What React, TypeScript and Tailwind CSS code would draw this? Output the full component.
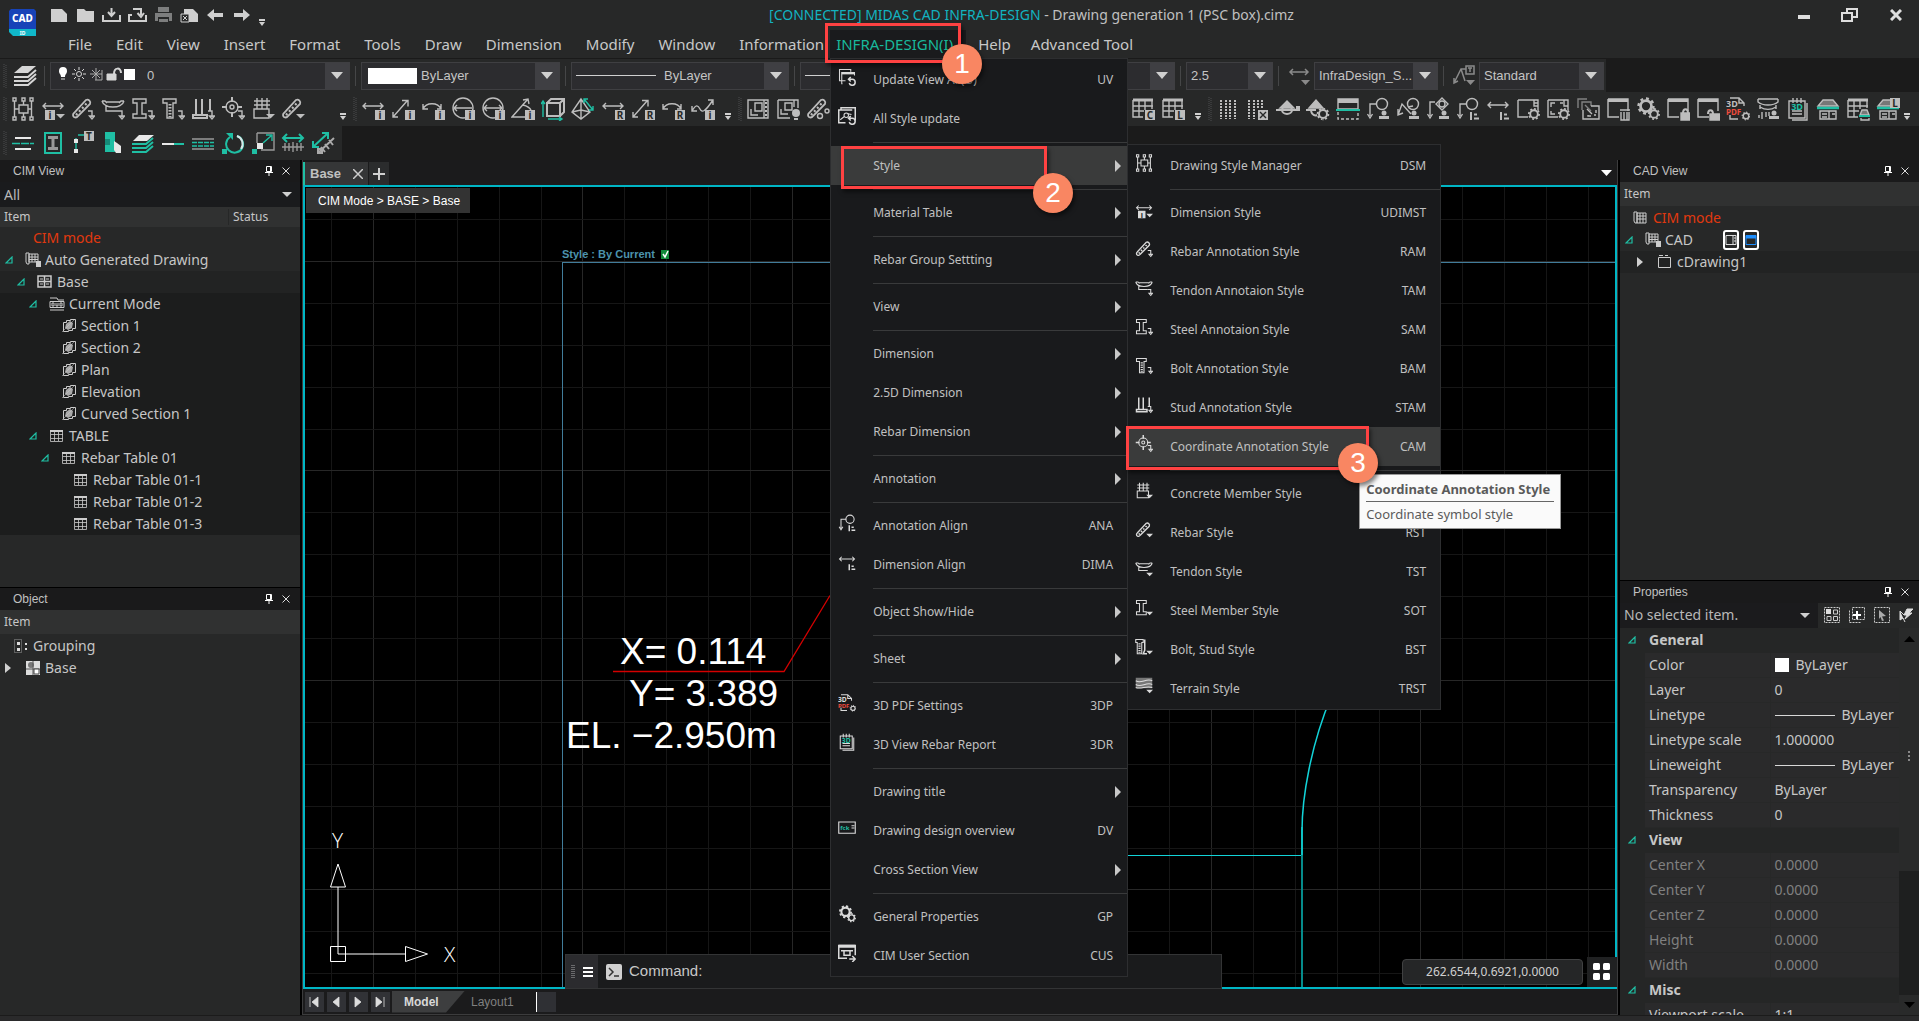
import React from 'react';

const ARIAL = "font-['Liberation_Sans',Arial,sans-serif]";
const TEAL = '#1fbfa4';

/* ---------- icon pieces (24 x 24 box) ---------- */

const Gear: React.FC<{ cx: number; cy: number; r: number }> = ({ cx, cy, r }) => (
  <g>
    <circle cx={cx} cy={cy} r={r} strokeWidth={r * 0.5} />
    <circle cx={cx} cy={cy} r={r * 1.35} strokeWidth={r * 0.45} pathLength={16} strokeDasharray="1 1" />
  </g>
);

const Letter: React.FC<{ children: string; x?: number; y?: number }> = ({ children, x = 14, y = 13 }) => (
  <g>
    <rect x={x} y={y} width={10} height={10} fill="currentColor" stroke="none" />
    <text x={x + 5} y={y + 9} fontSize={10} fontWeight={700} textAnchor="middle" fill="#272828" stroke="none">
      {children}
    </text>
  </g>
);

const hook = <path d="M17 14h4v6M18.500 19l2.500 3 2.500-3z" />;
const caret = <path d="M15 17h9l-4.500 4.500z" fill="currentColor" stroke="none" />;
const hArrow = <path d="M2 9h20M5 6L2 9l3 3M19 6l3 3-3 3" />;
const rebarBar = (
  <g>
    <path d="M3 20a2.500 2.500 0 010-4L15 3a3 3 0 014 4L7 19a3 3 0 01-4 1z" strokeWidth={1.800} />
    <path d="M5 18L17 5" strokeWidth={2.200} strokeDasharray="2 2.500" />
  </g>
);
const tendonBar = (
  <g>
    <path d="M5 5h14M1 4h3l2 2M23 4h-3l-2 2M1 4c2 8 20 8 22 0M5 9v5h12" />
  </g>
);
const steelBeam = <path d="M2 2h13v4h-4v11h4v4H2v-4h4V6H2z" />;
const bolt = (
  <g>
    <path d="M2 2h13v4h-3v15H6V6H2z" />
    <path d="M9 7v13" strokeWidth={3} strokeDasharray="1.500 1.500" />
  </g>
);
const target = (
  <g>
    <circle cx={11} cy={10} r={6} />
    <circle cx={11} cy={10} r={2} />
    <path d="M11 0v5M11 15v5M1 10h5M16 10h5" strokeWidth={2} />
  </g>
);
const windowFrame = (
  <g>
    <path d="M2 2h20v12M2 2v18h11" />
    <path d="M2 3.500h20" strokeWidth={3} />
  </g>
);
const tableGrid = (
  <g>
    <path d="M2 3h20" strokeWidth={3} />
    <path d="M2 3v17h10M2 9h20M2 14h11M8 3v17M14 3v10M21 3v9" />
  </g>
);
const bubble = (
  <g>
    <circle cx={16} cy={7} r={5.500} />
    <path d="M11 7H4v12M1.500 17L4 21l2.500-4" />
  </g>
);
const stamp = (
  <g fill="currentColor" stroke="none">
    <circle cx={18} cy={16} r={2.500} />
    <path d="M13 19h10v3H13z" />
  </g>
);
const listMark = <path d="M15 15v8M18 17.500h3M18 21.500h5" strokeWidth={2} />;
const house = (
  <g>
    <path d="M7 3h10l5 6H2z" fill="#777" />
    <path d="M1 11h22" stroke={TEAL} strokeWidth={2.500} />
    <path d="M4 14h16v8H4zM13 14v8M6 17h5M6 20h5M16 17h3" />
  </g>
);

const icons: Record<string, React.ReactNode> = {
  styleManager: <path d="M2 1h3v3H2zM11 1h3v3h-3zM19 1h3v3h-3zM2 20h3v3H2zM11 20h3v3h-3zM19 20h3v3h-3zM8 8h9v8H8zM3.500 4v16M20.500 4v16M12.500 4v4M12.500 16v4M3.500 12H8M17 12h3.500" />,
  dimStyle: <g>{hArrow}<Letter x={4} y={13}>i</Letter>{caret}</g>,
  rebarAnn: <g>{rebarBar}{hook}</g>,
  tendonAnn: <g>{tendonBar}{hook}</g>,
  steelAnn: <g>{steelBeam}{hook}</g>,
  boltAnn: <g>{bolt}{hook}</g>,
  studAnn: <g><path d="M2 18h14v3H2zM5 18V2M11 18V2M19 14V2" strokeWidth={2} />{hook}</g>,
  coordAnn: <g>{target}{hook}</g>,
  concrete: <g><path d="M3 12h15v9H3zM6 1v11M11 1v11M16 1v11M3 4h16M3 8h16" />{caret}</g>,
  rebar: <g>{rebarBar}{caret}</g>,
  tendon: <g>{tendonBar}{caret}</g>,
  steel: <g>{steelBeam}{caret}</g>,
  boltStud: <g><path d="M1 2h10v4H9v15H3V6H1z" /><path d="M6 7v13" strokeWidth={3} strokeDasharray="1.500 1.500" /><path d="M13 2v14l-2 5h5" strokeWidth={2} />{caret}</g>,
  terrain: <g><path d="M1 1h22v14H1z" fill="#777" stroke="none" /><path d="M1 5c7 5 14-4 22 0M1 10c7 5 14-4 22 0M1 14c7 3 14-3 22 0" stroke="#ddd" />{caret}</g>,
  dimI: <g>{hArrow}<Letter>i</Letter></g>,
  alignedI: <g><path d="M2 20L16 4M11 3.500h6v6M2 15v5h5" /><Letter>i</Letter></g>,
  arcI: <g><path d="M2 12C5 5 17 5 20 12M2 7v5h5M20 7v5h-4" /><Letter>i</Letter></g>,
  radiusI: <g><circle cx={12} cy={11} r={10} /><path d="M3 11h18M6 8l-3 3 3 3" /><Letter>i</Letter></g>,
  diameterI: <g><circle cx={12} cy={11} r={10} /><path d="M3 11h18M6 8l-3 3 3 3M18 8l3 3-3 3" /><Letter>i</Letter></g>,
  angleI: <g><path d="M14 20H1L17 2M12 8c4 1 7 3 8 5M12 3l5-1 1 5" /><Letter>i</Letter></g>,
  box3d: <g><path d="M6 6h13v13H6zM6 6l4-4h13v13l-4 4M19 6l4-4" strokeWidth={2} /><path d="M2 5v15M0 7l2-3 2 3M7 22h13M18 20l3 2-3 2" stroke={TEAL} /></g>,
  pyramid: <g><path d="M10 2L1 15l9 7 9-7zM10 2v20M1 15l9-2 9 2" /><path d="M13 2l9 11M13 6V2h4M22 9v4h-4" stroke={TEAL} /></g>,
  dimR: <g>{hArrow}<Letter>R</Letter></g>,
  alignedR: <g><path d="M2 20L16 4M11 3.500h6v6M2 15v5h5" /><Letter>R</Letter></g>,
  arcR: <g><path d="M2 12C5 5 17 5 20 12M2 7v5h5M20 7v5h-4" /><Letter>R</Letter></g>,
  curveI: <g><path d="M1 14c4-7 6-6 8-2s5 3 13-9M17 3h5v5M1 9v5h5" /><Letter>i</Letter></g>,
  sheet: <g><path d="M2 3h20v18H2zM18 3v18M5 12v6h7M9 6h7v8H9z" /><path d="M19 6h2M19 10h2M19 14h2M19 18h2" strokeWidth={2} /></g>,
  sheetBulb: <g><path d="M2 3h20v8M2 3v18h12M18 3v7M5 12v5h7M9 6h7v7H9z" /><circle cx={20} cy={16} r={4} fill="currentColor" stroke="none" /><path d="M18 22h4" strokeWidth={2} /></g>,
  rebarDots: <g>{rebarBar}<circle cx={14} cy={19} r={2.500} /><circle cx={21} cy={14} r={2} /></g>,
  tableC: <g>{tableGrid}<Letter>C</Letter></g>,
  tableL: <g>{tableGrid}<Letter>L</Letter></g>,
  dotsV: <path d="M5 3v19M10 3v19M14 3v19M19 3v19" strokeWidth={2} strokeDasharray="2 1" />,
  dotsX: <g><path d="M3 3v19M8 3v19M12 3v9M16 3v9" strokeWidth={2} strokeDasharray="2 1" /><path d="M12 13h10v10H12z" fill="currentColor" stroke="none" /><path d="M14 15l6 6M20 15l-6 6" stroke="#272828" /></g>,
  level: <g><path d="M4 11l7-7 7 7z" fill="currentColor" /><ellipse cx={11} cy={13} rx={5} ry={4} strokeWidth={2} /><path d="M0 13h24" strokeWidth={2} /><path d="M20 9h4v4h-4z" fill="currentColor" stroke="none" /></g>,
  levelGear: <g><path d="M3 11l7-8 7 8z" fill="currentColor" /><path d="M0 13h10M5 14c1 4 4 5 6 4" strokeWidth={2} /><Gear cx={17} cy={17} r={4} /></g>,
  section: <g><path d="M2 2h20v10H2z" /><path d="M2 4h20" strokeWidth={4} /><path d="M0 13h24" stroke={TEAL} strokeWidth={2} /><path d="M2 15v7h20v-7" strokeDasharray="3 2" /></g>,
  annStamp: <g>{bubble}{stamp}</g>,
  annStamp2: <g><circle cx={17} cy={7} r={5.500} /><path d="M2 18L6 7l9 10M2 12v6l5-2M12 10l5-1" />{stamp}</g>,
  coordStamp: <g><path d="M9 5H4v14M1.500 17L4 21l2.500-4" /><circle cx={16} cy={7} r={3} /><path d="M16 1l6 6-6 6-6-6z" />{stamp}</g>,
  annAlign: <g>{bubble}{listMark}</g>,
  dimAlign: <g><path d="M2 8h20M5 5L2 8l3 3M19 5l3 3-3 3" />{listMark}</g>,
  winGear: <g><path d="M2 3h20v10M2 3v17h10M18 3v6h4M18 6h4" /><Gear cx={18} cy={17} r={3.800} /></g>,
  frameGear: <g><path d="M2 3h20v10M2 3v17h10M18 3v6h4M5 10V6h4M5 14v3h4M14 6h3" /><Gear cx={18} cy={17} r={3.800} /></g>,
  convert: <g><path d="M2 11V2h9M2 2l4 0M6 13V5h9v4M9 8l6 6" strokeOpacity={0.600} /><path d="M15 9h8v13H7V13M11 12l5 5M12 18v1h3M20 13v3M20 18h-2" /></g>,
  winTrash: <g>{windowFrame}<path d="M14 13h10M15 15v8h8v-8M18 15v8M21 15v8" /></g>,
  gears: <g><Gear cx={10} cy={9} r={5.500} /><Gear cx={18} cy={17} r={3.800} /></g>,
  winLock: <g>{windowFrame}<path d="M15 16h9v7h-9z" fill="currentColor" /><path d="M17 16c0-5 5-5 5 0" strokeWidth={2} /></g>,
  winUnlock: <g>{windowFrame}<path d="M14 17h10v6H14z" fill="currentColor" /><path d="M12 17c0-5 5-5 5 0" strokeWidth={2} /></g>,
  pdf3d: (
    <g>
      <path d="M4 1h9l5 5v3M13 1v5h5M4 18v4h8" />
      <g stroke="none" fontSize={9} fontWeight={700}>
        <rect x={0} y={3} width={11} height={7} fill="#1c1c1e" />
        <text x={0} y={10} fill="currentColor">3D</text>
        <text x={0} y={18} fill="#ee4b3c" fontSize={8}>PDF</text>
      </g>
      <Gear cx={20} cy={19} r={2.800} />
    </g>
  ),
  pileStamp: <g><path d="M2 2v3c5 4 15 4 20 0V2M4 10c5 3 11 3 16 0M4 8v4M20 8v4M6 15v7M10 15v5M3 18v3M13 15v4M2 2h20" />{stamp}</g>,
  report3d: (
    <g>
      <path d="M3 4h16v17H3zM7 1v5M11 1v5M15 1v5M21 6v17H6M6 17h10M6 14h10" />
      <text x={11} y={13} fontSize={9} fontWeight={700} fill={TEAL} stroke="none" textAnchor="middle">3D</text>
    </g>
  ),
  house,
  tableHouse: <g><path d="M2 3h20" strokeWidth={3} /><path d="M2 3v17h10M2 9h20M2 14h11M8 3v17M14 3v9M21 3v8" /><path d="M16 13h5l2 5h-9z" fill="#777" /><path d="M13 19h11" stroke={TEAL} strokeWidth={2} /><path d="M15 21v2h8v-2" /></g>,
  houseL: <g>{house}<Letter x={14} y={1}>L</Letter></g>,
  updateView: <g><path d="M10 17H2V2h15v3M6 21H5V6h17v4" /><path d="M5 7h17" strokeWidth={3} /><path d="M14 15h5a4 4 0 11-4 5M17 12l-3 3 3 3" strokeWidth={2} /></g>,
  styleUpdate: <g><path d="M10 21H1V4h18M4 4V1h19v17" strokeWidth={2} /><circle cx={11} cy={11} r={3} /><path d="M3 17l5-4M13 9l5 1" /><path d="M14 15h5a4 4 0 11-4 5M17 12l-3 3 3 3" strokeWidth={2} /></g>,
  overview: <g><path d="M1 4h22v15H1z" strokeWidth={1.500} /><text x={3} y={15} fontSize={8} fontWeight={700} fill={TEAL} stroke="none">fck</text><path d="M18 9h4M18 12h4" /></g>,
  userSection: <g><path d="M12 19H1V2h22v13" strokeWidth={2} /><path d="M1 3h22" strokeWidth={4} /><path d="M4 9h16M8 9v6h8V9M15 20h7M19 16l4 4-4 4" strokeWidth={2} /></g>,
  // third toolbar
  lineRows: <g><path d="M4 7h16M4 18h16" stroke="#e8e8e8" strokeWidth={2} /><path d="M1 12.500h22" stroke={TEAL} strokeDasharray="8 1" /></g>,
  beamBox: <g><path d="M4 2h16v20H4z" stroke={TEAL} strokeWidth={2} /><path d="M7 5h10v3h-3.500v8H17v3H7v-3h3.500V8H7z" fill="#999" stroke="none" /></g>,
  leaderT: <g><path d="M5 19V7M7 4h7" stroke={TEAL} /><Letter x={13} y={0}>T</Letter><path d="M3 8h4v4H3zM3 18h4v4H3z" fill="#e8e8e8" stroke="none" /></g>,
  pick: <g><path d="M4 1h10v20H4z" fill={TEAL} stroke="none" /><path d="M4 8h5v6H4z" fill="#158a78" stroke="none" /><path d="M13 10v9l2 3h5v-7l-4-3z" fill="#e8e8e8" stroke="none" /></g>,
  layersTeal: <g><path d="M8 4h15l-7 6H2z" fill="#e8e8e8" stroke="none" /><path d="M1 13h14l7-6M1 17h14l7-6M1 21h14l7-6" stroke={TEAL} strokeWidth={2} /></g>,
  lineHalf: <g><path d="M1 13h12" stroke="#e8e8e8" strokeWidth={2} /><path d="M13 13h10" stroke={TEAL} strokeWidth={2} /></g>,
  linesMulti: <g><path d="M1 8h22M1 18h22" stroke="#999" /><path d="M1 11.500h22M1 15h22" stroke={TEAL} strokeDasharray="5 1" /></g>,
  rotate: <g><path d="M9 6a8.500 8.500 0 107-1" stroke={TEAL} strokeWidth={2} /><path d="M16 5a8.500 8.500 0 014 13" stroke="#d8e8e8" strokeWidth={2} /><path d="M5 2h7v7z" fill={TEAL} stroke="none" /><path d="M1 18h5v5H1z" fill={TEAL} stroke="none" /></g>,
  scaleBox: <g><path d="M6 2h17v17H10M6 2v10" stroke="#999" /><path d="M12 12l8-7M15 4h6v6" stroke={TEAL} /><path d="M6 12h6v6H6z" fill="#e8e8e8" stroke="none" /><path d="M1 18h5v5H1z" fill={TEAL} stroke="none" /></g>,
  stretch: <g><path d="M2 7h20M6 3L2 7l4 4M18 3l4 4-4 4" stroke={TEAL} strokeWidth={2} /><path d="M1 16h22M4 12v8M8 12v8M12 11v10M16 12v8M20 12v8" stroke="#999" /></g>,
  stretchDiag: <g><path d="M2 16L16 3M2 10v6h6M11 2h6v6" stroke={TEAL} strokeWidth={2} /><path d="M7 22L23 7M10 16l4 5M14 13l4 5M18 9l4 5M7 18h4v4H7z" stroke="#aaa" strokeWidth={2} /></g>,
};

const Icon: React.FC<{ name: string; className?: string }> = ({ name, className = 'h-6 w-6' }) => (
  <svg viewBox="0 0 24 24" className={`shrink-0 ${className}`} fill="none" stroke="currentColor" strokeWidth={1.4} aria-hidden>
    {icons[name]}
  </svg>
);

/* ---------- toolbar building blocks ---------- */

const Grip = () => (
  <svg width={5} height={24} className="shrink-0 text-[#4c4d4e]" aria-hidden>
    <path d="M1 0v24M3 1v24" stroke="currentColor" strokeDasharray="1 1" />
  </svg>
);

const Divider = () => <div className="h-5 w-px shrink-0 bg-[#454647]" />;

const Overflow = () => (
  <button aria-label="More tools" className="flex h-6 w-2 shrink-0 items-end justify-center">
    <svg width={6} height={8} aria-hidden>
      <path d="M0 1h6" stroke="#d0d0d0" strokeWidth={2} />
      <path d="M0 3h6L3 7z" fill="#d0d0d0" />
    </svg>
  </button>
);

const ToolGroup: React.FC<{ names: string[] }> = ({ names }) => (
  <div className="flex">
    {names.map((name) => (
      <button key={name} aria-label={name} className="flex h-8 w-[30px] shrink-0 items-center justify-center">
        <Icon name={name} />
      </button>
    ))}
  </div>
);

const Picker: React.FC<{ label: string; value: string; className: string; children?: React.ReactNode }> = ({
  label,
  value,
  className,
  children,
}) => (
  <div className={`flex h-7 shrink-0 items-center border border-[#3f3f42] bg-[#2c2c2f] ${className}`}>
    {children}
    <select aria-label={label} className={`h-full min-w-0 flex-1 appearance-none bg-transparent pl-1 text-[13px] text-[#c4c4c4] outline-none ${ARIAL}`}>
      <option>{value}</option>
    </select>
    <span className="flex h-full w-6 shrink-0 items-center justify-center bg-[#3f3f43]">
      <svg width={12} height={7} aria-hidden>
        <path d="M0 0h12L6 7z" fill="#d0d0d0" />
      </svg>
    </span>
  </div>
);

const Logo = () => (
  <svg width={27} height={27} viewBox="0 0 27 27" aria-label="CAD ID">
    <path d="M2 0h23l2 2v18H0V2z" fill="#1743b8" />
    <path d="M0 20h27v7H4l-4-4z" fill="#10b7c9" />
    <text x={13.500} y={13} textAnchor="middle" fontSize={10} fontWeight={800} fill="#fff">CAD</text>
    <text x={13.500} y={26} textAnchor="middle" fontSize={5} fontWeight={700} fill="#fff">ID</text>
  </svg>
);

const quickActions: { label: string; art: React.ReactNode }[] = [
  { label: 'New', art: <path d="M1 3h11l5 5v8H1z" fill="currentColor" /> },
  { label: 'Open', art: <path d="M1 3h7l2 2h8v11H1z" fill="currentColor" /> },
  { label: 'Save', art: <path d="M1 9v6h17V9M9.500 2v7M6 6l3.500 4L13 6" stroke="currentColor" strokeWidth={2} fill="none" /> },
  { label: 'Save as', art: <path d="M4 9H1v6h17V9M5 3h8v6M9.500 7l3.500 4 3-4" stroke="currentColor" strokeWidth={2} fill="none" /> },
  { label: 'Print', art: <path d="M4 1h11v5H4zM1 7h17v8h-3v-4H4v4H1zM5 13h9v3H5z" fill="#7d7e7e" /> },
  { label: 'Export', art: <g><path d="M4 3h9l5 5v8H4z" fill="currentColor" /><path d="M1 8h8v8H1z" fill="#272828" stroke="currentColor" /><path d="M3 10l4 4M7 10l-4 4" stroke="currentColor" /></g> },
  { label: 'Undo', art: <path d="M1 9l7-6v4h9v4H8v4z" fill="currentColor" /> },
  { label: 'Redo', art: <path d="M18 9l-7-6v4H2v4h9v4z" fill="currentColor" /> },
];

/* ---------- menus ---------- */

type MenuEntry = { label: string; code?: string; icon?: string; sub?: boolean } | 'sep';

const infraMenu: MenuEntry[] = [
  { label: 'Update View All(U)', code: 'UV', icon: 'updateView' },
  { label: 'All Style update', icon: 'styleUpdate' },
  'sep',
  { label: 'Style', sub: true },
  'sep',
  { label: 'Material Table', sub: true },
  'sep',
  { label: 'Rebar Group Settting', sub: true },
  'sep',
  { label: 'View', sub: true },
  'sep',
  { label: 'Dimension', sub: true },
  { label: '2.5D Dimension', sub: true },
  { label: 'Rebar Dimension', sub: true },
  'sep',
  { label: 'Annotation', sub: true },
  'sep',
  { label: 'Annotation Align', code: 'ANA', icon: 'annAlign' },
  { label: 'Dimension Align', code: 'DIMA', icon: 'dimAlign' },
  'sep',
  { label: 'Object Show/Hide', sub: true },
  'sep',
  { label: 'Sheet', sub: true },
  'sep',
  { label: '3D PDF Settings', code: '3DP', icon: 'pdf3d' },
  { label: '3D View Rebar Report', code: '3DR', icon: 'report3d' },
  'sep',
  { label: 'Drawing title', sub: true },
  { label: 'Drawing design overview', code: 'DV', icon: 'overview' },
  { label: 'Cross Section View', sub: true },
  'sep',
  { label: 'General Properties', code: 'GP', icon: 'gears' },
  { label: 'CIM User Section', code: 'CUS', icon: 'userSection' },
];

const styleMenu: MenuEntry[] = [
  { label: 'Drawing Style Manager', code: 'DSM', icon: 'styleManager' },
  'sep',
  { label: 'Dimension Style', code: 'UDIMST', icon: 'dimStyle' },
  { label: 'Rebar Annotation Style', code: 'RAM', icon: 'rebarAnn' },
  { label: 'Tendon Annotaion Style', code: 'TAM', icon: 'tendonAnn' },
  { label: 'Steel Annotaion Style', code: 'SAM', icon: 'steelAnn' },
  { label: 'Bolt Annotation Style', code: 'BAM', icon: 'boltAnn' },
  { label: 'Stud Annotation Style', code: 'STAM', icon: 'studAnn' },
  { label: 'Coordinate Annotation Style', code: 'CAM', icon: 'coordAnn' },
  'sep',
  { label: 'Concrete Member Style', icon: 'concrete' },
  { label: 'Rebar Style', code: 'RST', icon: 'rebar' },
  { label: 'Tendon Style', code: 'TST', icon: 'tendon' },
  { label: 'Steel Member Style', code: 'SOT', icon: 'steel' },
  { label: 'Bolt, Stud Style', code: 'BST', icon: 'boltStud' },
  { label: 'Terrain Style', code: 'TRST', icon: 'terrain' },
];

const Menu: React.FC<{ entries: MenuEntry[]; active: string; className: string; children?: React.ReactNode }> = ({
  entries,
  active,
  className,
  children,
}) => (
  <div role="menu" className={`absolute border border-[#2d2e30] bg-[#191a1c] py-px text-xs text-[#c0c0c0] ${className}`}>
    {entries.map((entry, index) =>
      entry === 'sep' ? (
        <div key={index} className="flex h-2 items-center pl-[42px]">
          <div className="h-px flex-1 bg-[#393a3b]" />
        </div>
      ) : (
        <div key={index} className="relative">
          <button
            role="menuitem"
            className={`flex h-[39px] w-full items-center pl-[7px] text-left ${entry.sub ? 'pr-1.5' : 'pr-3.5'} ${
              entry.label === active ? 'bg-[#3a3b3b]' : ''
            }`}
          >
            <span className="mb-1.5 mr-[17px] w-[18px] text-[#dadada]">
              {entry.icon && <Icon name={entry.icon} className="h-[18px] w-[18px]" />}
            </span>
            <span className="flex-1 whitespace-nowrap">{entry.label}</span>
            {entry.code && <span>{entry.code}</span>}
            {entry.sub && (
              <svg width={6} height={12} aria-hidden>
                <path d="M0 0l6 6-6 6z" fill="#c8c8c8" />
              </svg>
            )}
          </button>
          {entry.label === active && children}
        </div>
      ),
    )}
  </div>
);

const Callout: React.FC<{ step: number; className: string; badge: string }> = ({ step, className, badge }) => (
  <div className={`pointer-events-none absolute z-40 border-3 border-[#ff4242] shadow-[2px_3px_4px_rgba(0,0,0,0.5)] ${className}`}>
    <span className={`absolute flex h-10 w-10 items-center justify-center rounded-full bg-[#f98662] text-[28px] text-white shadow-[2px_3px_4px_rgba(0,0,0,0.5)] ${badge} ${ARIAL}`}>
      {step}
    </span>
  </div>
);

const Tooltip = () => (
  <div className="absolute left-[231px] top-[47px] z-30 w-[202px] border border-[#999] bg-[#fafafa] px-1.5 pb-1 pt-1 text-[13px] leading-5 text-[#5a5a5a]">
    <p className="whitespace-nowrap border-b border-[#666] pb-0.5 font-bold">Coordinate Annotation Style</p>
    <p className="pt-0.5">Coordinate symbol style</p>
  </div>
);

const menuNames = ['File', 'Edit', 'View', 'Insert', 'Format', 'Tools', 'Draw', 'Dimension', 'Modify', 'Window'];

const Header = () => (
  <header className="flex h-[58px] bg-[#272828]">
    <div className="w-[50px] pl-[9px] pt-[9px]">
      <Logo />
    </div>
    <div className="flex min-w-0 flex-1 flex-col">
      <div className="flex h-[30px] items-center">
        <div className="flex gap-[7px] text-[#cfcfcf]">
          {quickActions.map((action) => (
            <button key={action.label} aria-label={action.label}>
              <svg width={19} height={18} aria-hidden>{action.art}</svg>
            </button>
          ))}
          <Overflow />
        </div>
        <h1 className="flex-1 whitespace-nowrap pl-4 text-center text-sm text-[#c0c0c0]">
          <span className="text-[#12b3c0]">[CONNECTED] MIDAS CAD INFRA-DESIGN</span> - Drawing generation 1 (PSC box).cimz
        </h1>
        <div className="flex text-[#dedede]">
          <button aria-label="Minimize" className="flex w-[46px] items-center justify-center">
            <svg width={12} height={14} aria-hidden><path d="M0 9h12" stroke="currentColor" strokeWidth={4} /></svg>
          </button>
          <button aria-label="Restore" className="flex w-[46px] items-center justify-center">
            <svg width={18} height={14} fill="none" stroke="currentColor" strokeWidth={2} aria-hidden>
              <path d="M1 5h10v8H1zM6 5V1h10v8h-5" />
            </svg>
          </button>
          <button aria-label="Close" className="flex w-[46px] items-center justify-center">
            <svg width={12} height={12} aria-hidden><path d="M1 1l10 10M11 1L1 11" stroke="currentColor" strokeWidth={3} /></svg>
          </button>
        </div>
      </div>
      <nav className="flex h-7 items-center pl-1.5 text-[15px] text-[#c8c8c8]">
        {menuNames.map((name) => (
          <button key={name} className="px-3">{name}</button>
        ))}
        <button className="pl-3 pr-1.5">Information</button>
        <div className="relative flex h-full w-[136px] items-center bg-[#1a1b1d]">
          <button className="pl-1.5 text-[#18b99b]">INFRA-DESIGN(I)</button>
          <Menu entries={infraMenu} active="Style" className="left-0 top-full z-20 w-[298px]">
            <Callout step={2} className="left-2.5 top-0 h-[43px] w-[206px]" badge="-bottom-[27px] -right-[29px]" />
            <Menu entries={styleMenu} active="Coordinate Annotation Style" className="-top-0.5 left-full z-20 w-[314px]">
              <Callout step={3} className="-left-0.5 -top-px h-11 w-[243px]" badge="-bottom-4 -right-3" />
              <Tooltip />
            </Menu>
          </Menu>
          <Callout step={1} className="-left-[5px] -top-[7px] h-10 w-[136px]" badge="-bottom-6 -right-6" />
        </div>
        <button className="px-3">Help</button>
        <button className="px-2">Advanced Tool</button>
      </nav>
    </div>
  </header>
);

const LayersIcon = () => (
  <svg width={24} height={22} viewBox="0 0 24 22" fill="none" stroke="#d6d6d6" strokeWidth={2} aria-hidden>
    <path d="M9 1h14l-8 7H1z" fill="#d6d6d6" stroke="none" />
    <path d="M1 12h14l8-7M1 16h14l8-7M1 20h14l8-7" />
  </svg>
);

const LayerState = () => (
  <svg width={76} height={16} viewBox="0 0 76 16" fill="none" stroke="#d6d6d6" className="mb-1 ml-2 mr-2 shrink-0" aria-hidden>
    <path d="M4 1a4 4 0 014 4c0 3-2 3-2 6H2C2 8 0 8 0 5a4 4 0 014-4z" fill="#fff" stroke="none" />
    <path d="M2 13h4" />
    <circle cx={20} cy={8} r={2.500} />
    <path d="M20 1v3M20 12v3M13 8h3M24 8h3M15 3l2 2M23 11l2 2M25 3l-2 2M17 11l-2 2" />
    <path d="M37 2v12M31 8h12M33 4l8 8M41 4l-8 8M36 14h7V4" stroke="#aaa" />
    <path d="M48 8h9v6h-9z" fill="#d6d6d6" />
    <path d="M55 8c0-7 7-7 7-1" strokeWidth={2} />
    <path d="M65 3h11v11H65z" fill="#fff" stroke="none" />
  </svg>
);

const StyleIcon: React.FC<{ d: string }> = ({ d }) => (
  <svg width={24} height={24} fill="none" stroke="#8a8a8a" strokeWidth={1.5} className="mx-[3px] shrink-0" aria-hidden>
    <path d={d} />
    <path d="M14 16h9l-4.500 5z" fill="#8a8a8a" stroke="none" />
  </svg>
);

const Toolbars = () => (
  <div className="bg-[#1b1b1b] text-[#bdbdbd]">
    <div className="flex h-[34px] w-[1606px] items-center gap-[5px] border-t border-[#1a1a1a] bg-[#272828] pl-[3px]">
      <Grip />
      <button aria-label="Layers" className="mr-0.5"><LayersIcon /></button>
      <Divider />
      <Picker label="Layer" value="0" className="w-[300px]"><LayerState /></Picker>
      <Divider />
      <Picker label="Color" value="ByLayer" className="w-[199px]">
        <span className="ml-1.5 h-4 w-[49px] shrink-0 bg-white" />
      </Picker>
      <Divider />
      <Picker label="Linetype" value="ByLayer" className="w-[218px]">
        <span className="ml-1 mr-1 h-px w-20 shrink-0 bg-[#d0d0d0]" />
      </Picker>
      <Divider />
      <Picker label="Lineweight" value="ByLayer" className="w-[375px]">
        <span className="ml-1 mr-1 h-px w-20 shrink-0 bg-[#d0d0d0]" />
      </Picker>
      <Divider />
      <Picker label="Text height" value="2.5" className="w-[87px]" />
      <Divider />
      <div className="flex items-center">
        <StyleIcon d="M3 8h18M6 5L3 8l3 3M18 5l3 3-3 3" />
        <Picker label="Dimension style" value="InfraDesign_S..." className="w-[124px]" />
      </div>
      <Divider />
      <div className="flex items-center">
        <StyleIcon d="M2 19L9 5h5M9 5l4 12M2 14v5l4-2M14 2h8v8h-8zM16 4h4M18 4v4" />
        <Picker label="Leader style" value="Standard" className="w-[125px]" />
      </div>
    </div>
    <div className="flex h-[34px] items-center bg-[#272828] pl-[3px]">
      <Grip />
      <ToolGroup names={['styleManager', 'dimStyle', 'rebarAnn', 'tendonAnn', 'steelAnn', 'boltAnn', 'studAnn', 'coordAnn', 'concrete', 'rebar']} />
      <div className="ml-[31px] mr-1.5"><Overflow /></div>
      <Grip />
      <ToolGroup names={['dimI', 'alignedI', 'arcI', 'radiusI', 'diameterI', 'angleI', 'box3d', 'pyramid', 'dimR', 'alignedR', 'arcR', 'curveI']} />
      <div className="mx-1.5"><Overflow /></div>
      <Grip />
      <div className="flex w-[445px] justify-between">
        <ToolGroup names={['sheet', 'sheetBulb', 'rebarDots']} />
        <ToolGroup names={['tableC', 'tableL']} />
      </div>
      <div className="mx-1.5"><Overflow /></div>
      <Grip />
      <ToolGroup
        names={[
          'dotsV', 'dotsX', 'level', 'levelGear', 'section', 'annStamp', 'annStamp2', 'coordStamp', 'annAlign', 'dimAlign', 'winGear',
          'frameGear', 'convert', 'winTrash', 'gears', 'winLock', 'winUnlock', 'pdf3d', 'pileStamp', 'report3d', 'house', 'tableHouse', 'houseL',
        ]}
      />
      <Overflow />
    </div>
    <div className="flex h-[34px] w-[342px] items-center bg-[#272828] pl-[3px]">
      <Grip />
      <ToolGroup names={['lineRows', 'beamBox', 'leaderT', 'pick', 'layersTeal', 'lineHalf', 'linesMulti', 'rotate', 'scaleBox', 'stretch', 'stretchDiag']} />
    </div>
  </div>
);

/* ---------- side panels ---------- */

const PanelTitle: React.FC<{ title: string }> = ({ title }) => (
  <div className={`flex h-[22px] shrink-0 items-center bg-[#1a1a1b] pl-[13px] pr-2.5 text-xs text-[#c0c0c0] ${ARIAL}`}>
    <h2 className="flex-1">{title}</h2>
    <button aria-label={`Pin ${title}`} className="mr-[9px]">
      <svg width={8} height={10} fill="none" stroke="#fff" aria-hidden>
        <path d="M1.500 .5h5v5h-5zM5.500 0v6M0 6.500h8M4 6v4" />
      </svg>
    </button>
    <button aria-label={`Close ${title}`}>
      <svg width={8} height={8} stroke="#ddd" aria-hidden><path d="M.5 .5l7 7M7.500 .5l-7 7" /></svg>
    </button>
  </div>
);

const treeIcons: Record<string, React.ReactNode> = {
  auto: <g><path d="M1 1h3v11H2L1 10zM4 2h9v8H4zM7 2v8M10 2v8M4 5h9M4 7.500h9" /><path d="M11 9h5v6h-5z" fill="#ccc" stroke="none" /></g>,
  cim: <path d="M1 2h3v11H2L1 11zM4 3h9v10H4zM7 3v10M10 3v10M4 6h9M4 9h9" />,
  sheets: <g><path d="M1 2h13v11H1zM1 7.500h13M7.500 2v11" strokeWidth={1.500} /><path d="M3 5h3M9 5h3M3 10h3M9 10h3" /></g>,
  dwg: <path d="M1 2h7l1 2h6M1 5.500h14v6H1zM1 14h14M3 7v3h2V7zM7 7v3h2V7M11 7h2v3h-2z" />,
  drawing: <g><path d="M5.500 2.500h4v-1h5v9h-3v2h-4v1h-5v-9h3z" /><path d="M5 6l4-3 3 2-1 5-4 2-3-2z" fill="#aaa" stroke="none" /><path d="M1 14L14 1" strokeOpacity={0.500} /></g>,
  table: <g><path d="M1.500 2.500h12v11h-12zM5.500 3v10M9.500 3v10M2 6.500h12M2 10.500h12" strokeOpacity={0.800} /><path d="M1 3h13" strokeWidth={2} /></g>,
  grouping: <g><path d="M1.500 1.500h7v13h-7z" strokeDasharray="1 1" stroke="#999" /><path d="M4 4h3v3H4zM4 10h3v3H4zM12 5h2v2h-2zM12 10h2v2h-2z" fill="#ddd" stroke="none" /></g>,
  base: <g><path d="M1 1h14v14H1z" fill="#ddd" stroke="none" /><circle cx={6} cy={5} r={3} fill="#777" stroke="none" /><path d="M1 9h14M8 1v14" stroke="#555" /><path d="M9 9h5v5H9z" fill="#fff" stroke="#444" /></g>,
  folder: <path d="M1.500 3.500h12v10h-12zM2 1.500h4M8 1.500h3" />,
};

type TreeRow = { label: string; level: number; icon?: string; open?: boolean; accent?: boolean; bg?: string; extra?: React.ReactNode };

const cimRows: TreeRow[] = [
  { label: 'CIM mode', level: -1, accent: true },
  { label: 'Auto Generated Drawing', level: 0, icon: 'auto', open: true },
  { label: 'Base', level: 1, icon: 'sheets', open: true, bg: 'bg-[#222323]' },
  { label: 'Current Mode', level: 2, icon: 'dwg', open: true, bg: 'bg-[#1c1d1d]' },
  { label: 'Section 1', level: 3, icon: 'drawing', bg: 'bg-[#1c1d1d]' },
  { label: 'Section 2', level: 3, icon: 'drawing', bg: 'bg-[#1c1d1d]' },
  { label: 'Plan', level: 3, icon: 'drawing', bg: 'bg-[#1c1d1d]' },
  { label: 'Elevation', level: 3, icon: 'drawing', bg: 'bg-[#1c1d1d]' },
  { label: 'Curved Section 1', level: 3, icon: 'drawing', bg: 'bg-[#1c1d1d]' },
  { label: 'TABLE', level: 2, icon: 'table', open: true, bg: 'bg-[#1c1d1d]' },
  { label: 'Rebar Table 01', level: 3, icon: 'table', open: true, bg: 'bg-[#1c1d1d]' },
  { label: 'Rebar Table 01-1', level: 4, icon: 'table', bg: 'bg-[#1c1d1d]' },
  { label: 'Rebar Table 01-2', level: 4, icon: 'table', bg: 'bg-[#1c1d1d]' },
  { label: 'Rebar Table 01-3', level: 4, icon: 'table', bg: 'bg-[#1c1d1d]' },
];

const objectRows: TreeRow[] = [
  { label: 'Grouping', level: -1, icon: 'grouping' },
  { label: 'Base', level: 0, icon: 'base', open: false },
];

const cadRows: TreeRow[] = [
  { label: 'CIM mode', level: -1, icon: 'cim', accent: true },
  {
    label: 'CAD',
    level: 0,
    icon: 'auto',
    open: true,
    extra: (
      <span className="ml-[30px] flex gap-1">
        <svg width={16} height={20} aria-hidden>
          <rect x={1} y={1} width={14} height={18} rx={2} fill="none" stroke="#fff" strokeWidth={2} />
          <path d="M3 5.500h10v9H3zM10 5v9M11 8h2M11 11h2" fill="none" stroke="#ddd" />
        </svg>
        <svg width={16} height={20} aria-hidden>
          <rect x={1} y={1} width={14} height={18} rx={2} fill="none" stroke="#fff" strokeWidth={2} />
          <path d="M3 5.500h10v9H3z" fill="none" stroke="#1e8fff" />
          <path d="M3 7h10" stroke="#1e8fff" strokeWidth={3} />
        </svg>
      </span>
    ),
  },
  { label: 'cDrawing1', level: 1, icon: 'folder', open: false, bg: 'bg-[#222323]' },
];

const OpenMark = () => (
  <svg width={8} height={8} fill="none" stroke={TEAL} strokeWidth={1.2} aria-hidden><path d="M1 7l6-6v6z" /></svg>
);

const Tree: React.FC<{ rows: TreeRow[] }> = ({ rows }) => (
  <ul className="min-h-0 flex-1 overflow-hidden text-sm text-[#c6c6c6]">
    {rows.map((row) => (
      <li
        key={`${row.label}-${row.level}`}
        className={`flex h-[22px] items-center whitespace-nowrap ${row.bg ?? ''}`}
        style={{ paddingLeft: row.level < 0 ? 13 : 5 + row.level * 12 }}
      >
        {row.level >= 0 && (
          <span className="mr-3 w-2">
            {row.open === true && <OpenMark />}
            {row.open === false && <svg width={6} height={10} aria-hidden><path d="M0 0l6 5-6 5z" fill="#d0d0d0" /></svg>}
          </span>
        )}
        <svg width={16} height={16} fill="none" stroke="#ccc" className="mr-1 shrink-0" aria-hidden>
          {row.icon && treeIcons[row.icon]}
        </svg>
        <span className={row.accent ? 'text-[#e0380f]' : ''}>{row.label}</span>
        {row.extra}
      </li>
    ))}
  </ul>
);

const ColumnHeader: React.FC<{ className?: string; children: React.ReactNode }> = ({ className = 'h-6', children }) => (
  <div className={`flex shrink-0 items-center bg-[#303131] pl-1 text-xs text-[#c6c6c6] ${className}`}>{children}</div>
);

const LeftDock = () => (
  <aside className="flex w-[302px] shrink-0 flex-col border-r-2 border-black bg-[#272828]">
    <section className="flex min-h-0 flex-1 flex-col">
      <PanelTitle title="CIM View" />
      <div className="flex h-[25px] shrink-0 items-center bg-[#1a1b1d] pl-1 pr-2 text-[#b8b8b8]">
        <select aria-label="Filter" className="flex-1 appearance-none bg-transparent text-sm outline-none">
          <option>All</option>
        </select>
        <svg width={10} height={5} aria-hidden><path d="M0 0h10L5 5z" fill="#d0d0d0" /></svg>
      </div>
      <ColumnHeader className="h-5">
        <span className="flex-1">Item</span>
        <span className="w-[72px] border-l border-[#262727] pl-1">Status</span>
      </ColumnHeader>
      <Tree rows={cimRows} />
    </section>
    <section className="flex min-h-0 flex-1 flex-col border-t border-black">
      <PanelTitle title="Object" />
      <ColumnHeader>Item</ColumnHeader>
      <div className="flex flex-1 flex-col pt-px"><Tree rows={objectRows} /></div>
    </section>
  </aside>
);

const lineSample = <span className="mr-[7px] inline-block h-px w-[60px] shrink-0 bg-[#d8d8d8]" />;

const propertyGroups: { title: string; dim?: boolean; rows: { name: string; value: string; lead?: React.ReactNode }[] }[] = [
  {
    title: 'General',
    rows: [
      { name: 'Color', value: 'ByLayer', lead: <span className="mr-[7px] h-3.5 w-3.5 bg-white" /> },
      { name: 'Layer', value: '0' },
      { name: 'Linetype', value: 'ByLayer', lead: lineSample },
      { name: 'Linetype scale', value: '1.000000' },
      { name: 'Lineweight', value: 'ByLayer', lead: lineSample },
      { name: 'Transparency', value: 'ByLayer' },
      { name: 'Thickness', value: '0' },
    ],
  },
  {
    title: 'View',
    dim: true,
    rows: [
      { name: 'Center X', value: '0.0000' },
      { name: 'Center Y', value: '0.0000' },
      { name: 'Center Z', value: '0.0000' },
      { name: 'Height', value: '0.0000' },
      { name: 'Width', value: '0.0000' },
    ],
  },
  { title: 'Misc', rows: [{ name: 'Viewport scale', value: '1:1' }] },
];

const selectTools: { label: string; art: React.ReactNode }[] = [
  { label: 'Quick select', art: <g><path d="M.5 .5h15v15H.5z" strokeDasharray="2 1" /><path d="M9.500 3h4v4h-4zM3 9.500h4v4H3zM9.500 9.500h4v4h-4z" /><path d="M2 2h5v5H2z" fill="#ddd" stroke="none" /></g> },
  { label: 'Add to selection', art: <g><path d="M3.500 .5h12v12h-12zM.5 3.500v12h12" strokeDasharray="2 1" /><path d="M8 4v8M4 8h8" stroke="#fff" strokeWidth={2} /></g> },
  { label: 'Select objects', art: <g><path d="M.5 .5h15v15H.5z" strokeDasharray="2 1" /><path d="M5 3l7 6-4 .5 2 4-2 .5-1.500-4L5 12z" fill="#aaa" stroke="none" /></g> },
  { label: 'Select by filter', art: <path d="M1 4l4 4M1 4v9l3-2 2 4M8 2h6l-4 4h3l-7 6 2-4H5z" fill="#ddd" stroke="#ddd" /> },
];

const RightDock = () => (
  <aside className="flex w-[301px] shrink-0 flex-col border-l-2 border-black bg-[#272828]">
    <section className="flex min-h-0 flex-[420] flex-col">
      <PanelTitle title="CAD View" />
      <ColumnHeader>Item</ColumnHeader>
      <div className="flex flex-1 flex-col pt-px"><Tree rows={cadRows} /></div>
    </section>
    <section className="flex min-h-0 flex-[435] flex-col border-t border-black">
      <PanelTitle title="Properties" />
      <div className="flex h-[25px] shrink-0 items-center">
        <div className="flex h-full w-[198px] shrink-0 items-center bg-[#1b1b1d] pl-1 pr-2 text-[#b8b8b8]">
          <select aria-label="Selected item" className="min-w-0 flex-1 appearance-none bg-transparent text-sm outline-none">
            <option>No selected item.</option>
          </select>
          <svg width={10} height={5} aria-hidden><path d="M0 0h10L5 5z" fill="#d0d0d0" /></svg>
        </div>
        <div className="flex gap-[9px] pl-1.5">
          {selectTools.map((tool) => (
            <button key={tool.label} aria-label={tool.label}>
              <svg width={16} height={16} fill="none" stroke="#ccc" aria-hidden>{tool.art}</svg>
            </button>
          ))}
        </div>
      </div>
      <div className="flex min-h-0 flex-1 overflow-hidden">
        <table className="flex-1 table-fixed self-start border-collapse text-left text-sm leading-6 text-[#c6c6c6]">
          {propertyGroups.map((group) => (
            <tbody key={group.title}>
              <tr className="h-[25px] bg-[#252626]">
                <td className="w-[25px] pl-2"><OpenMark /></td>
                <th colSpan={2} className="p-0 pl-1 font-bold">{group.title}</th>
              </tr>
              {group.rows.map((row) => (
                <tr key={row.name} className={`h-[25px] ${group.dim ? 'text-[#808080]' : ''}`}>
                  <td className="w-[25px] bg-[#252626]" />
                  <td className="w-[125px] whitespace-nowrap border-b border-r border-[#272828] bg-[#2a2a2b] p-0 pl-1">{row.name}</td>
                  <td className="whitespace-nowrap border-b border-[#272828] bg-[#2a2a2b] p-0 pl-1">
                    <span className="flex items-center">{row.lead}{row.value}</span>
                  </td>
                </tr>
              ))}
            </tbody>
          ))}
        </table>
        <div className="flex w-5 shrink-0 flex-col items-center bg-[#1e1f1f]">
          <div className="flex w-full flex-[240] flex-col items-center justify-between bg-[#292a2a] pt-2">
            <svg width={11} height={6} aria-hidden><path d="M0 6h11L5.500 0z" fill="#000" /></svg>
            <svg width={2} height={10} aria-hidden><path d="M1 0v10" stroke="#888" strokeWidth={2} strokeDasharray="2 2" /></svg>
            <span />
          </div>
          <div className="flex-[126]" />
          <div className="flex h-5 w-full items-center justify-center bg-[#292a2a]">
            <svg width={11} height={6} aria-hidden><path d="M0 0h11L5.500 6z" fill="#000" /></svg>
          </div>
        </div>
      </div>
    </section>
  </aside>
);

/* ---------- drawing area ---------- */

const GRID_STEP = 41.9;

const Drawing = () => (
  <svg className="absolute inset-0 h-full w-full" fill="none" aria-label="Model space">
    <g shapeRendering="crispEdges">
      {Array.from({ length: 33 }).map((_, i) => (
        <rect key={`v${i}`} x={Math.round(26 + i * GRID_STEP)} y={0} width={1} height="100%" fill={i % 5 === 1 ? '#272727' : '#161616'} />
      ))}
      {Array.from({ length: 20 }).map((_, i) => (
        <rect key={`h${i}`} x={0} y={Math.round(32 + i * GRID_STEP)} width="100%" height={1} fill={i % 5 === 1 ? '#272727' : '#161616'} />
      ))}
      <rect x={257} y={75} width="100%" height="100%" stroke="#417c9a" />
    </g>

    <text x={257} y={71} fontSize={11} fontWeight={700} fill="#4c93ad">Style : By Current</text>
    <path d="M356 63h8v9h-8z" fill="#128a3a" />
    <path d="M358 67l2 3 3-6" stroke="#fff" strokeWidth={1.5} />

    <path d="M308 484.500h171l46-76" stroke="#d40000" strokeWidth={1.300} />
    <g fill="#fff" fontSize={37}>
      <text x={315} y={477}>X= 0.114</text>
      <text x={324} y={519}>Y= 3.389</text>
      <text x={261} y={561}>EL. −2.950m</text>
    </g>

    <path d="M820 668.500h177" stroke="#12d3d8" />
    <path d="M997 801V640" stroke="#058b8b" strokeWidth={2} />
    <path d="M997 668V644C997 610 1006 558 1026 510" stroke="#12d3d8" strokeWidth={1.500} />

    <g stroke="#fff">
      <path d="M25.500 759.500h15v15h-15zM33 767V700M33 767h68M25.500 700h15l-7.500-23zM100.500 759.500v15l22-7.500z" />
    </g>
    <g fill="#fff" fontSize={21} fontWeight={300} className="font-['Open_Sans']">
      <text x={27} y={661}>Y</text>
      <text x={139} y={775}>X</text>
    </g>
  </svg>
);

const navMarks = ['M5 1v10M13 1L7 6l6 5z', 'M12 1L6 6l6 5z', 'M6 1l6 5-6 5z', 'M5 1l6 5-6 5zM13 1v10'];

const Workspace = () => (
  <main className={`flex min-w-0 flex-1 flex-col border-x border-[#3c3c3d] bg-[#1b1b1c] ${ARIAL}`}>
    <div className="flex h-[25px] shrink-0 items-end pr-[5px]">
      <div className="flex h-[23px] w-[65px] items-center gap-3 border-l-2 border-[#1fbfa4] bg-[#353637] pl-[5px] text-[13px] font-bold text-[#c0c0c0]">
        Base
        <button aria-label="Close tab">
          <svg width={10} height={10} stroke="#ccc" strokeWidth={1.500} aria-hidden><path d="M0 0l10 10M10 0L0 10" /></svg>
        </button>
      </div>
      <button aria-label="New tab" className="ml-px flex h-[23px] w-5 items-center justify-center bg-[#2b2c2d]">
        <svg width={12} height={12} stroke="#d0d0d0" strokeWidth={2} aria-hidden><path d="M6 0v12M0 6h12" /></svg>
      </button>
      <span className="flex-1" />
      <button aria-label="Tab list" className="self-center">
        <svg width={11} height={6} aria-hidden><path d="M0 0h11L5.500 6z" fill="#fff" /></svg>
      </button>
    </div>
    <div className="relative min-h-0 flex-1 border-2 border-[#00b6c5] bg-black">
      <Drawing />
      <div className="absolute left-px top-px flex h-[25px] w-[164px] items-center bg-[#333] pl-3 text-xs text-white">
        CIM Mode &gt; BASE &gt; Base
      </div>
      <div className="absolute -bottom-0.5 left-[260px] flex h-[35px] w-[657px] items-center border border-[#333435] bg-[#1a1b1c]">
        <div className="flex h-full w-8 items-center justify-center gap-2 bg-[#2b2b2e]">
          <svg width={4} height={14} aria-hidden><path d="M1 0v14M3 0v14" stroke="#aaa" strokeDasharray="1 1" /></svg>
          <svg width={10} height={10} stroke="#fff" strokeWidth={2} aria-hidden><path d="M0 1h10M0 5h10M0 9h10" /></svg>
        </div>
        <svg width={16} height={16} className="ml-2" aria-hidden>
          <rect width={16} height={16} rx={2} fill="#d0d0d0" />
          <path d="M3 4l4 4-4 4M8 12h5" stroke="#333" strokeWidth={1.500} fill="none" />
        </svg>
        <label htmlFor="command" className="pl-[7px] text-[15px] text-[#c8c8c8]">Command:</label>
        <input id="command" className="min-w-0 flex-1 bg-transparent px-2 text-[15px] text-[#c8c8c8] outline-none" />
      </div>
      <div className="absolute -right-0.5 bottom-0 flex items-center gap-1">
        <div className="flex h-[26px] w-[181px] items-center justify-center rounded border border-[#404142] bg-[#252627] font-['Noto_Sans',sans-serif] text-xs text-[#d0d0d0]">
          262.6544,0.6921,0.0000
        </div>
        <button aria-label="Display options" className="flex h-[30px] w-[30px] items-center justify-center bg-[#202122]">
          <svg width={18} height={18} fill="#fff" aria-hidden>
            <rect width={7} height={7} rx={1.500} /><rect x={10} width={7} height={7} rx={1.500} />
            <rect y={10} width={7} height={7} rx={1.500} /><rect x={10} y={10} width={7} height={7} rx={1.500} />
          </svg>
        </button>
      </div>
    </div>
    <div className="flex h-[26px] shrink-0 items-center border-b border-[#3c3c3d] pl-0.5 text-xs">
      <div className="flex gap-[3px]">
        {navMarks.map((d) => (
          <button key={d} aria-label="Scroll layouts" className="flex h-5 w-[19px] items-center justify-center bg-[#313236]">
            <svg width={19} height={12} fill="#ddd" stroke="#ddd" strokeWidth={0.800} aria-hidden><path d={d} /></svg>
          </button>
        ))}
      </div>
      <button className="ml-0.5 flex h-[22px] w-[73px] items-center bg-[#3d3e3f] pl-3 font-bold text-[#d8d8d8] [clip-path:polygon(0_0,100%_0,74%_100%,0_100%)]">
        Model
      </button>
      <button className="h-[22px] w-[66px] pl-1.5 text-left text-[#808080]">Layout1</button>
      <span className="ml-[5px] h-5 w-5 border-l border-white bg-[#2f3034]" />
    </div>
  </main>
);

export default function App() {
  return (
    <div className="flex h-screen flex-col overflow-hidden bg-[#2a2a2b] font-['Noto_Sans','Open_Sans',sans-serif]">
      <Header />
      <Toolbars />
      <div className="flex min-h-0 flex-1">
        <LeftDock />
        <Workspace />
        <RightDock />
      </div>
      <footer className="h-[6px] shrink-0 border-t border-[#1b1b1b]" />
    </div>
  );
}
